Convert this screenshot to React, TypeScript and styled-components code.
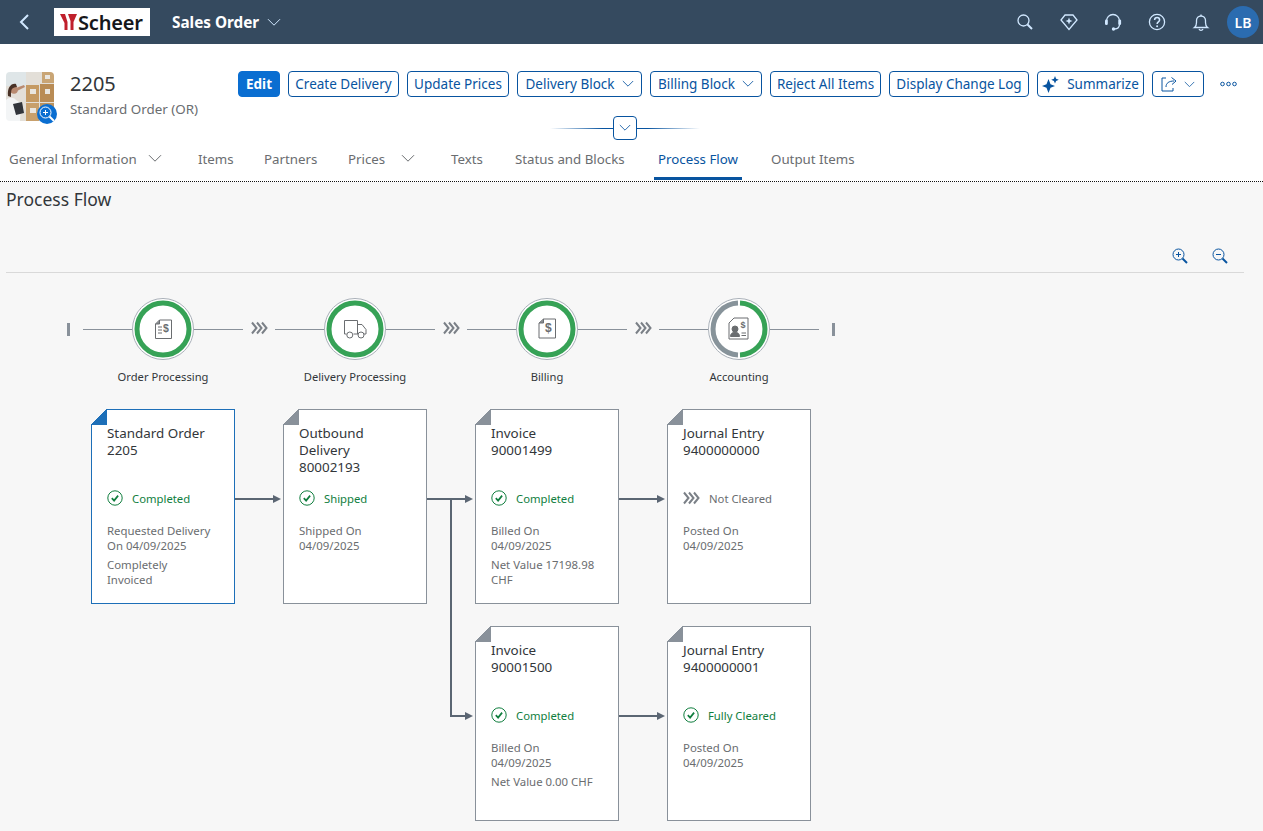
import React from "react";
import styled, { createGlobalStyle } from "styled-components";

const FONT = `"Noto Sans", "Open Sans", "Liberation Sans", sans-serif`;
const BG = "#f7f7f7";

const Global = createGlobalStyle`
  html, body { margin: 0; padding: 0; height: 100%; background: ${BG}; }
  body { font-family: ${FONT}; color: #32363a; overflow: hidden; }
  * { box-sizing: border-box; }
`;

const Page = styled.div`
  width: 1263px;
  height: 831px;
  overflow: hidden;
  display: flex;
  flex-direction: column;
`;

const ShellBar = styled.header`
  height: 44px;
  background: #354a5f;
  display: flex;
  align-items: center;
  padding: 0 4px 0 18px;
  flex: none;
`;
const BackButton = styled.span`
  display: flex;
  width: 14px;
  margin-right: 22px;
`;
const Logo = styled.div`
  width: 96px;
  height: 28px;
  background: #fff;
  display: flex;
  align-items: center;
  padding-left: 6px;
`;
const LogoText = styled.span`
  font-family: "Noto Sans", sans-serif;
  font-weight: 600;
  font-size: 20px;
  letter-spacing: -0.2px;
  color: #16171a;
`;
const AppTitle = styled.div`
  margin-left: 22px;
  display: flex;
  align-items: center;
  gap: 8px;
  color: #fff;
  font-weight: 700;
  font-size: 15.3px;
`;
const ShellActions = styled.div`
  margin-left: auto;
  display: flex;
  align-items: center;
  gap: 26px;
`;
const ShellIcon = styled.span`
  display: flex;
  width: 18px;
  height: 18px;
`;
const UserAvatar = styled.div`
  width: 32px;
  height: 32px;
  margin-left: -9px;
  border-radius: 50%;
  background: #2b6cb0;
  color: #fff;
  font-size: 14px;
  font-weight: 600;
  display: flex;
  align-items: center;
  justify-content: center;
`;

const ObjectHeader = styled.section`
  background: #fff;
  height: 138px;
  flex: none;
  display: flex;
  flex-direction: column;
  border-bottom: 1px dotted #111;
`;
const HeaderTop = styled.div`
  display: flex;
  padding: 27px 0 0 6px;
  height: 72px;
`;
const Thumb = styled.div`
  position: relative;
  width: 48px;
  height: 49px;
  margin-top: 1px;
  flex: none;
`;
const ThumbBadge = styled.span`
  position: absolute;
  right: -3px;
  bottom: -3px;
  width: 20px;
  height: 20px;
  border-radius: 50%;
  background: #0a6ed1;
  display: flex;
  align-items: center;
  justify-content: center;
`;
const TitleBlock = styled.div`
  width: 184px;
  flex: none;
  padding-left: 16px;
`;
const ObjectId = styled.div`
  font-size: 20px;
  line-height: 26px;
  color: #32363a;
`;
const ObjectSub = styled.div`
  font-size: 13.4px;
  line-height: 18px;
  margin-top: 3px;
  color: #6a6d70;
  white-space: nowrap;
`;
const Toolbar = styled.div`
  display: flex;
  align-items: center;
  gap: 8px;
  height: 26px;
`;
const Button = styled.button<{ $primary?: boolean; $w: number }>`
  height: 26px;
  width: ${(p) => p.$w}px;
  flex: none;
  padding: 0;
  border-radius: 4px;
  font-family: ${FONT};
  font-size: 13.5px;
  font-weight: ${(p) => (p.$primary ? 700 : 400)};
  color: ${(p) => (p.$primary ? "#fff" : "#0854a0")};
  background: ${(p) => (p.$primary ? "#0a6ed1" : "#fff")};
  border: 1px solid ${(p) => (p.$primary ? "#0a6ed1" : "#0854a0")};
  display: flex;
  align-items: center;
  justify-content: center;
  gap: 7px;
  white-space: nowrap;
`;
const Overflow = styled.span`
  display: flex;
  margin-left: 8px;
`;
const CollapseRow = styled.div`
  position: relative;
  width: 150px;
  height: 24px;
  margin-left: 550px;
  display: flex;
  justify-content: center;
  align-items: center;
  background: linear-gradient(90deg, transparent, #0854a0 35%, #0854a0 65%, transparent) center / 100% 1px no-repeat;
`;
const CollapseButton = styled.span`
  width: 24px;
  height: 24px;
  border: 1px solid #0854a0;
  border-radius: 4px;
  background: #fff;
  display: flex;
  align-items: center;
  justify-content: center;
`;
const Tabs = styled.nav`
  height: 41px;
  display: flex;
  padding-left: 5px;
  gap: 25px;
`;
const Tab = styled.div<{ $active?: boolean; $w: number }>`
  width: ${(p) => p.$w}px;
  height: 40px;
  flex: none;
  padding-left: 4px;
  display: flex;
  align-items: center;
  font-size: 13.3px;
  white-space: nowrap;
  color: ${(p) => (p.$active ? "#0854a0" : "#6a6d70")};
  border-bottom: 3px solid ${(p) => (p.$active ? "#0854a0" : "transparent")};
`;
const TabCaret = styled.span`
  display: flex;
  margin-left: auto;
  margin-right: 7px;
`;

const Content = styled.main`
  flex: 1;
  background: ${BG};
  padding: 0 0 0 6px;
`;
const SectionTitle = styled.h2`
  margin: 6px 0 0;
  font-size: 17.5px;
  line-height: 22px;
  font-weight: 400;
  color: #32363a;
`;
const FlowToolbar = styled.div`
  width: 1238px;
  height: 42px;
  margin-top: 21px;
  padding: 17px 16px 0 0;
  border-bottom: 1px solid #d9d9d9;
  display: flex;
  justify-content: flex-end;
  gap: 24px;
`;
const ZoomIcon = styled.span`
  display: flex;
  width: 16px;
  height: 16px;
`;
const LaneRow = styled.div`
  display: flex;
  align-items: flex-start;
  margin: 25px 0 0 61px;
  height: 111px;
`;
const EndMark = styled.span<{ $end?: boolean }>`
  width: 3px;
  height: 13px;
  margin-top: 25px;
  margin-left: ${(p) => (p.$end ? 13 : 0)}px;
  background: #89919a;
  flex: none;
`;
const LaneLine = styled.span<{ $lead?: boolean }>`
  width: 49px;
  height: 1px;
  margin-top: 31px;
  margin-left: ${(p) => (p.$lead ? 13 : 0)}px;
  background: #89919a;
  flex: none;
`;
const LaneChevron = styled.span`
  width: 32px;
  height: 16px;
  margin-top: 23px;
  flex: none;
  display: flex;
  justify-content: center;
`;
const Step = styled.div`
  width: 62px;
  flex: none;
  display: flex;
  flex-direction: column;
  align-items: center;
`;
const StepLabel = styled.div`
  margin-top: 9px;
  font-size: 11.2px;
  line-height: 16px;
  color: #32363a;
  white-space: nowrap;
`;

const Canvas = styled.div`
  position: relative;
  margin-left: 85px;
  display: grid;
  grid-template-columns: repeat(4, 144px);
  grid-auto-rows: 195px;
  column-gap: 48px;
  row-gap: 22px;
  width: 720px;
`;
const Connectors = styled.svg`
  position: absolute;
  left: 0;
  top: 0;
  width: 720px;
  height: 412px;
  pointer-events: none;
`;
const Card = styled.article<{ $selected?: boolean; $col: number }>`
  position: relative;
  grid-column: ${(p) => p.$col};
  background: #fff;
  border: 1px solid ${(p) => (p.$selected ? "#1d6fb8" : "#89919a")};
  padding: 15px 10px 0 15px;
  &::before {
    content: "";
    position: absolute;
    left: -1px;
    top: -1px;
    width: 16px;
    height: 16px;
    background: linear-gradient(135deg, ${BG} 50%, ${(p) => (p.$selected ? "#1d6fb8" : "#89919a")} 50%);
  }
`;
const CardTitle = styled.div`
  height: 51px;
  font-size: 13.4px;
  line-height: 17px;
  color: #32363a;
`;
const StatusRow = styled.div<{ $neutral?: boolean }>`
  margin-top: 13px;
  height: 18px;
  display: flex;
  align-items: center;
  gap: 9px;
  font-size: 11.3px;
  color: ${(p) => (p.$neutral ? "#6a6d70" : "#107e3e")};
  white-space: nowrap;
`;
const Details = styled.div`
  margin-top: 16px;
`;
const Detail = styled.div`
  margin-top: 4px;
  font-size: 11.4px;
  line-height: 15px;
  color: #6a6d70;
`;

const Chevron = ({ color, w = 12 }: { color: string; w?: number }) => (
  <svg width={w} height={w * 0.6} viewBox="0 0 14 8" fill="none">
    <path d="M1 1l6 6 6-6" stroke={color} strokeWidth="1" />
  </svg>
);

const Check = () => (
  <svg width="16" height="16" viewBox="0 0 16 16" fill="none">
    <circle cx="8" cy="8" r="7.2" stroke="#107e3e" strokeWidth="1" />
    <path d="M4.8 8.2l2.3 2.4 4-5" stroke="#107e3e" strokeWidth="1.7" />
  </svg>
);

const Chevrons = ({ color }: { color: string }) => (
  <svg width="17" height="14" viewBox="0 0 17 14" fill="none">
    <path d="M1 1.5L5.5 7 1 12.5M6 1.5L10.5 7 6 12.5M11 1.5L15.5 7 11 12.5" stroke={color} strokeWidth="2" />
  </svg>
);

const MagnifierPlus = ({ minus, color = "#0854a0" }: { minus?: boolean; color?: string }) => (
  <svg width="16" height="16" viewBox="0 0 16 16" fill="none">
    <circle cx="6.5" cy="6.5" r="5.5" stroke={color} strokeWidth="1" />
    <path d="M4 6.5h5" stroke={color} strokeWidth="1" />
    {!minus && <path d="M6.5 4v5" stroke={color} strokeWidth="1" />}
    <path d="M10.5 10.5l4.5 4.5" stroke={color} strokeWidth="2" />
  </svg>
);

const RING_G = "#36a256";
const Ring: React.FC<{ half?: boolean; children: React.ReactNode }> = ({ half, children }) => (
  <svg width="62" height="62" viewBox="0 0 62 62" fill="none">
    <circle cx="31" cy="31" r="30.5" fill="#fff" stroke="#a9b0b8" strokeWidth="1" />
    {half ? (
      <>
        <path d="M32 5.02A26 26 0 0 1 32 56.98" stroke={RING_G} strokeWidth="5" />
        <path d="M30 56.98A26 26 0 0 1 30 5.02" stroke="#87939a" strokeWidth="5" />
      </>
    ) : (
      <circle cx="31" cy="31" r="26" stroke={RING_G} strokeWidth="5" />
    )}
    {children}
  </svg>
);

const S = "#6a6d70";
const OrderGlyph = () => (
  <g stroke={S} fill="none" strokeWidth="1">
    <path d="M23.5 26l4-4H39.5V40.5H23.5z" />
    <path d="M23.5 26h4v-4" fill="#8a8d90" />
    <path d="M26 29h4M26 32h4M26 35h4" />
    <text x="31" y="34" fontSize="10.5" fontWeight="700" fill={S} stroke="none" fontFamily="Liberation Sans">$</text>
  </g>
);
const TruckGlyph = () => (
  <g stroke={S} fill="none" strokeWidth="1">
    <path d="M20.5 36V22.5h13V36" />
    <path d="M33.5 26.5h4.5l4 5V36h-2" />
    <path d="M20.5 36h2M29.5 36h4.5" />
    <circle cx="25.8" cy="37" r="3" />
    <circle cx="37" cy="37" r="3" />
  </g>
);
const BillGlyph = () => (
  <g stroke={S} fill="none" strokeWidth="1">
    <path d="M23 25l4.5-4H39.5V40H23z" />
    <path d="M23 25h4.5v-4" fill="#8a8d90" />
    <text x="29" y="33.5" fontSize="12" fontWeight="700" fill={S} stroke="none" fontFamily="Liberation Sans">$</text>
  </g>
);
const JournalGlyph = () => (
  <g stroke={S} fill="none" strokeWidth="1">
    <path d="M21 25l5-5H40V41H21z" />
    <circle cx="27" cy="31" r="3" fill={S} />
    <path d="M22.5 38.5c0-3 2-4.2 4.5-4.2s4.5 1.2 4.5 4.2z" fill={S} />
    <path d="M33.5 35h4.5M33.5 37.5h4.5" />
    <text x="32.5" y="29.5" fontSize="9" fontWeight="700" fill={S} stroke="none" fontFamily="Liberation Sans">$</text>
  </g>
);

const SHELL = "#d1e8ff";

const cards = [
  { col: 1, selected: true, title: ["Standard Order", "2205"], status: "Completed", details: [["Requested Delivery", "On 04/09/2025"], ["Completely", "Invoiced"]] },
  { col: 2, title: ["Outbound", "Delivery", "80002193"], status: "Shipped", details: [["Shipped On", "04/09/2025"]] },
  { col: 3, title: ["Invoice", "90001499"], status: "Completed", details: [["Billed On", "04/09/2025"], ["Net Value 17198.98", "CHF"]] },
  { col: 4, title: ["Journal Entry", "9400000000"], status: "Not Cleared", neutral: true, details: [["Posted On", "04/09/2025"]] },
  { col: 3, title: ["Invoice", "90001500"], status: "Completed", details: [["Billed On", "04/09/2025"], ["Net Value 0.00 CHF"]] },
  { col: 4, title: ["Journal Entry", "9400000001"], status: "Fully Cleared", details: [["Posted On", "04/09/2025"]] },
];

const buttons = [
  { label: "Edit", w: 42, primary: true },
  { label: "Create Delivery", w: 111 },
  { label: "Update Prices", w: 102 },
  { label: "Delivery Block", w: 125, chevron: true },
  { label: "Billing Block", w: 112, chevron: true },
  { label: "Reject All Items", w: 111 },
  { label: "Display Change Log", w: 140 },
];

const tabs = [
  { label: "General Information", w: 164, chevron: true },
  { label: "Items", w: 41 },
  { label: "Partners", w: 59 },
  { label: "Prices", w: 78, chevron: true },
  { label: "Texts", w: 39 },
  { label: "Status and Blocks", w: 118 },
  { label: "Process Flow", w: 88, active: true },
  { label: "Output Items", w: 90 },
];

const steps = [
  { label: "Order Processing", glyph: <OrderGlyph /> },
  { label: "Delivery Processing", glyph: <TruckGlyph /> },
  { label: "Billing", glyph: <BillGlyph /> },
  { label: "Accounting", glyph: <JournalGlyph />, half: true },
];

const Arrow = ({ d, tipX, tipY }: { d: string; tipX: number; tipY: number }) => (
  <g>
    <path d={d} stroke="#5b6673" strokeWidth="2" fill="none" />
    <path d={`M${tipX} ${tipY}l-8-4v8z`} fill="#5b6673" />
  </g>
);

const WarehousePhoto = () => (
  <svg width="48" height="49" viewBox="0 0 48 49">
    <defs>
      <filter id="soft" x="-5%" y="-5%" width="110%" height="110%">
        <feGaussianBlur stdDeviation="0.5" />
      </filter>
      <clipPath id="thumbClip">
        <rect width="48" height="49" rx="4" />
      </clipPath>
    </defs>
    <g clipPath="url(#thumbClip)">
      <g filter="url(#soft)">
        <rect width="48" height="49" fill="#e3dfd8" />
        <rect width="20" height="14" fill="#dfe6e8" />
        <rect x="36" y="0" width="12" height="11" fill="#c9a574" />
        <rect x="20" y="13" width="13" height="17" fill="#c59a63" />
        <rect x="34" y="12" width="14" height="18" fill="#b98c55" />
        <rect x="20" y="31" width="13" height="18" fill="#c8a06c" />
        <rect x="34" y="31" width="14" height="18" fill="#bb935f" />
        <rect x="24" y="17" width="6" height="5" fill="#e9e6e0" />
        <rect x="39" y="17" width="5" height="5" fill="#e9e6e0" />
        <rect x="24" y="36" width="6" height="5" fill="#e9e6e0" />
        <rect x="39" y="3" width="5" height="4" fill="#e9e6e0" />
        <path d="M0 28c3-3 8-3 10 0l5 3-1 18H0z" fill="#f3f5f6" />
        <circle cx="8" cy="18" r="3.8" fill="#b98a70" />
        <path d="M2 24c-1-8 3-13 8-12l1 3c-3 0-4 1-5 2s-1 5-1 8z" fill="#4a3026" />
        <path d="M10 16l8-3 1 2-8 4z" fill="#b98a70" />
        <path d="M7 32l9-2 2 11-8 2z" fill="#30343a" />
      </g>
    </g>
  </svg>
);

export default function App() {
  return (
    <Page>
      <Global />
      <ShellBar>
        <BackButton>
          <svg width="12" height="18" viewBox="0 0 12 18" fill="none">
            <path d="M10 2L3 9l7 7" stroke={SHELL} strokeWidth="2" />
          </svg>
        </BackButton>
        <Logo>
          <svg width="18" height="16" viewBox="0 0 18 16">
            <path d="M0 0h5l2.5 8V16H4.5V9zM17 0H8l2.5 7v9h3V8z" fill="#c0202c" />
          </svg>
          <LogoText>Scheer</LogoText>
        </Logo>
        <AppTitle>
          Sales Order
          <Chevron color={SHELL} w={14} />
        </AppTitle>
        <ShellActions>
          <ShellIcon>
            <svg width="18" height="18" viewBox="0 0 18 18" fill="none">
              <circle cx="7.5" cy="7.5" r="5.5" stroke={SHELL} strokeWidth="1.3" />
              <path d="M11.5 11.5l4.5 4.5" stroke={SHELL} strokeWidth="2" />
            </svg>
          </ShellIcon>
          <ShellIcon>
            <svg width="18" height="18" viewBox="0 0 18 18" fill="none">
              <path d="M5 2h8l4 5-8 9.5L1 7z" stroke={SHELL} strokeWidth="1.3" />
              <path d="M9 4.5l1 2.5 2.5 1-2.5 1L9 11.5 8 9 5.5 8l2.5-1z" fill={SHELL} />
            </svg>
          </ShellIcon>
          <ShellIcon>
            <svg width="18" height="18" viewBox="0 0 18 18" fill="none">
              <path d="M2.5 10V8a6.5 6.5 0 0 1 13 0v3c0 3-2 5-5 5" stroke={SHELL} strokeWidth="1.3" />
              <rect x="1" y="6.5" width="2.8" height="5.5" rx="1.3" fill={SHELL} />
              <rect x="14.3" y="6.5" width="2.8" height="5.5" rx="1.3" fill={SHELL} />
              <circle cx="9.5" cy="16" r="1.7" fill={SHELL} />
            </svg>
          </ShellIcon>
          <ShellIcon>
            <svg width="18" height="18" viewBox="0 0 18 18" fill="none">
              <circle cx="9" cy="9" r="7.6" stroke={SHELL} strokeWidth="1.3" />
              <path d="M6.6 7c0-1.5 1.1-2.4 2.5-2.4S11.6 5.5 11.6 7c0 1.8-2.5 2-2.5 4" stroke={SHELL} strokeWidth="1.5" />
              <circle cx="9.1" cy="13.3" r="1" fill={SHELL} />
            </svg>
          </ShellIcon>
          <ShellIcon>
            <svg width="18" height="18" viewBox="0 0 18 18" fill="none">
              <path d="M2.5 14.5c1.5-1 2-2.5 2-5V7.5a4.5 4.5 0 0 1 9 0V9.5c0 2.5.5 4 2 5z" stroke={SHELL} strokeWidth="1.3" />
              <path d="M7 16a2.2 2.2 0 0 0 4 0" stroke={SHELL} strokeWidth="1.3" />
              <path d="M9 1.5V3" stroke={SHELL} strokeWidth="1.3" />
            </svg>
          </ShellIcon>
          <UserAvatar>LB</UserAvatar>
        </ShellActions>
      </ShellBar>

      <ObjectHeader>
        <HeaderTop>
          <Thumb>
            <WarehousePhoto />
            <ThumbBadge>
              <MagnifierPlus color="#fff" />
            </ThumbBadge>
          </Thumb>
          <TitleBlock>
            <ObjectId>2205</ObjectId>
            <ObjectSub>Standard Order (OR)</ObjectSub>
          </TitleBlock>
          <Toolbar>
            {buttons.map((b) => (
              <Button key={b.label} $w={b.w} $primary={b.primary}>
                {b.label}
                {b.chevron && <Chevron color="#0854a0" />}
              </Button>
            ))}
            <Button $w={107}>
              <svg width="18" height="18" viewBox="0 0 18 18">
                <path d="M0 11l4.5-1.8L6.5 4l2 5.2L13 11l-4.5 1.8-2 5.2-2-5.2z" fill="#0854a0" />
                <path d="M13 1l1.1 2.7 2.7 1.1-2.7 1.1L13 8.5l-1.1-2.6-2.7-1.1 2.7-1.1z" fill="#0854a0" />
              </svg>
              Summarize
            </Button>
            <Button $w={52}>
              <svg width="16" height="16" viewBox="0 0 16 16" fill="none">
                <path d="M5 2H1v13h11v-3" stroke="#0854a0" strokeWidth="1" />
                <path d="M5 11c0-4 3-6 8-6M10.5 1.5L15 5l-4 3.5" stroke="#0854a0" strokeWidth="1" />
              </svg>
              <Chevron color="#0854a0" w={11} />
            </Button>
            <Overflow>
              <svg width="17" height="6" viewBox="0 0 17 6" fill="none">
                <circle cx="2.5" cy="3" r="1.8" stroke="#0854a0" />
                <circle cx="8.5" cy="3" r="1.8" stroke="#0854a0" />
                <circle cx="14.5" cy="3" r="1.8" stroke="#0854a0" />
              </svg>
            </Overflow>
          </Toolbar>
        </HeaderTop>
        <CollapseRow>
          <CollapseButton>
            <Chevron color="#0854a0" />
          </CollapseButton>
        </CollapseRow>
        <Tabs>
          {tabs.map((t) => (
            <Tab key={t.label} $w={t.w} $active={t.active}>
              {t.label}
              {t.chevron && (
                <TabCaret>
                  <Chevron color="#6a6d70" w={14} />
                </TabCaret>
              )}
            </Tab>
          ))}
        </Tabs>
      </ObjectHeader>

      <Content>
        <SectionTitle>Process Flow</SectionTitle>
        <FlowToolbar>
          <ZoomIcon>
            <MagnifierPlus />
          </ZoomIcon>
          <ZoomIcon>
            <MagnifierPlus minus />
          </ZoomIcon>
        </FlowToolbar>
        <LaneRow>
          <EndMark />
          <LaneLine $lead />
          {steps.map((s, i) => (
            <React.Fragment key={s.label}>
              <Step>
                <Ring half={s.half}>{s.glyph}</Ring>
                <StepLabel>{s.label}</StepLabel>
              </Step>
              <LaneLine />
              {i < 3 && (
                <>
                  <LaneChevron>
                    <Chevrons color="#7b8087" />
                  </LaneChevron>
                  <LaneLine />
                </>
              )}
            </React.Fragment>
          ))}
          <EndMark $end />
        </LaneRow>
        <Canvas>
          {cards.map((c) => (
            <Card key={c.title.join()} $col={c.col} $selected={c.selected}>
              <CardTitle>
                {c.title.map((l) => (
                  <div key={l}>{l}</div>
                ))}
              </CardTitle>
              <StatusRow $neutral={c.neutral}>
                {c.neutral ? <Chevrons color="#7b8087" /> : <Check />}
                {c.status}
              </StatusRow>
              <Details>
                {c.details.map((d) => (
                  <Detail key={d.join()}>
                    {d.map((l) => (
                      <div key={l}>{l}</div>
                    ))}
                  </Detail>
                ))}
              </Details>
            </Card>
          ))}
          <Connectors viewBox="0 0 720 412">
            <Arrow d="M144 90H184" tipX={190} tipY={90} />
            <Arrow d="M336 90H376" tipX={382} tipY={90} />
            <Arrow d="M360 90V307H376" tipX={382} tipY={307} />
            <Arrow d="M528 90H568" tipX={574} tipY={90} />
            <Arrow d="M528 307H568" tipX={574} tipY={307} />
          </Connectors>
        </Canvas>
      </Content>
    </Page>
  );
}
